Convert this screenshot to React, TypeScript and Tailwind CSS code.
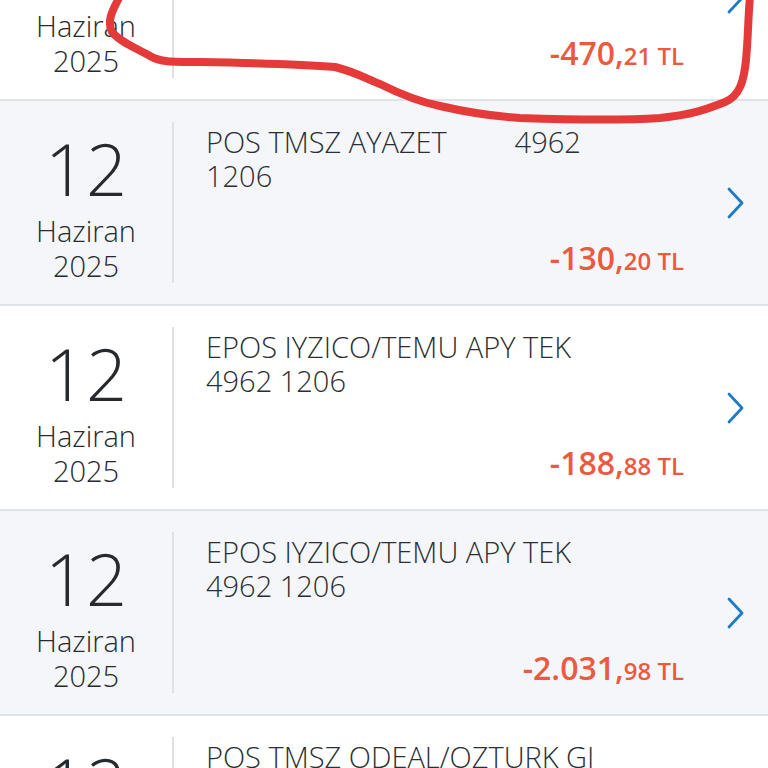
import React from 'react';

type Txn = {
  day: string;
  month: string;
  year: string;
  lines: string[];
  whole: string;
  cents: string;
};

const txns: Txn[] = [
  { day: '12', month: 'Haziran', year: '2025', lines: ['EPOS IYZICO/TEMU APY TEK', '4962 1206'], whole: '-470,', cents: '21 TL' },
  { day: '12', month: 'Haziran', year: '2025', lines: ['POS TMSZ AYAZET         4962', '1206'], whole: '-130,', cents: '20 TL' },
  { day: '12', month: 'Haziran', year: '2025', lines: ['EPOS IYZICO/TEMU APY TEK', '4962 1206'], whole: '-188,', cents: '88 TL' },
  { day: '12', month: 'Haziran', year: '2025', lines: ['EPOS IYZICO/TEMU APY TEK', '4962 1206'], whole: '-2.031,', cents: '98 TL' },
  { day: '12', month: 'Haziran', year: '2025', lines: ['POS TMSZ ODEAL/OZTURK GI', '4962 1206'], whole: '-95,', cents: '00 TL' },
];

function Chevron() {
  return (
    <svg width="22" height="34" viewBox="0 0 22 34" fill="none">
      <path d="M4 3 L17 17 L4 31" stroke="#1f7bc6" strokeWidth="2.8" strokeLinecap="round" strokeLinejoin="round" />
    </svg>
  );
}

function Row({ txn, shaded }: { txn: Txn; shaded: boolean }) {
  return (
    <div className={`flex h-[205px] border-b-2 border-[#dfe3e8] ${shaded ? 'bg-[#f4f6f9]' : 'bg-white'}`}>
      <div className="flex w-[174px] shrink-0 py-[21px]">
        <div className="flex flex-1 flex-col items-center justify-center border-r-2 border-[#dde0e4] pt-[8px] text-[#262a2e]">
          <span className="text-[72px] leading-[76px] font-light">{txn.day}</span>
          <span className="mt-[7px] text-[29px] leading-[35px] font-light">{txn.month}</span>
          <span className="text-[29px] leading-[36px] font-light">{txn.year}</span>
        </div>
      </div>
      <div className="flex flex-1 flex-col justify-between pl-[32px] pt-[24px] pb-[20px]">
        <div className="text-[29px] leading-[34px] font-light text-[#2b2f33]">
          {txn.lines.map((line) => (
            <div key={line} className="whitespace-pre">{line}</div>
          ))}
        </div>
        <div className="self-end font-semibold leading-[40px] text-[#ea5a3f]">
          <span className="text-[32px]">{txn.whole}</span>
          <span className="text-[24px]">{txn.cents}</span>
        </div>
      </div>
      <div className="flex w-[84px] shrink-0 items-center justify-center pl-[20px]">
        <Chevron />
      </div>
    </div>
  );
}

export default function App() {
  return (
    <div className="relative h-[768px] w-[768px] overflow-hidden bg-white" style={{ fontFamily: '"Open Sans", "Noto Sans", sans-serif' }}>
      <div className="-mt-[104px]">
        {txns.map((txn, i) => (
          <Row key={i} txn={txn} shaded={i % 2 === 1} />
        ))}
      </div>
      <svg className="pointer-events-none absolute left-0 top-0" width="768" height="140" viewBox="0 0 768 140" fill="none">
        <path
          d="M120 -4 C114 8 106 20 112 32 C120 42 136 48 150 56 C160 62 170 62 200 62 C260 63 300 64 335 67 C355 72 365 78 380 84 C400 94 420 102 440 106 C470 113 490 116 520 118 C580 120 630 120 660 118 C690 115 705 110 725 102 C740 96 744 80 746 60 C748 40 748 20 750 -4"
          stroke="#e53a3a"
          strokeWidth="8"
          strokeLinecap="round"
          strokeLinejoin="round"
        />
      </svg>
    </div>
  );
}
